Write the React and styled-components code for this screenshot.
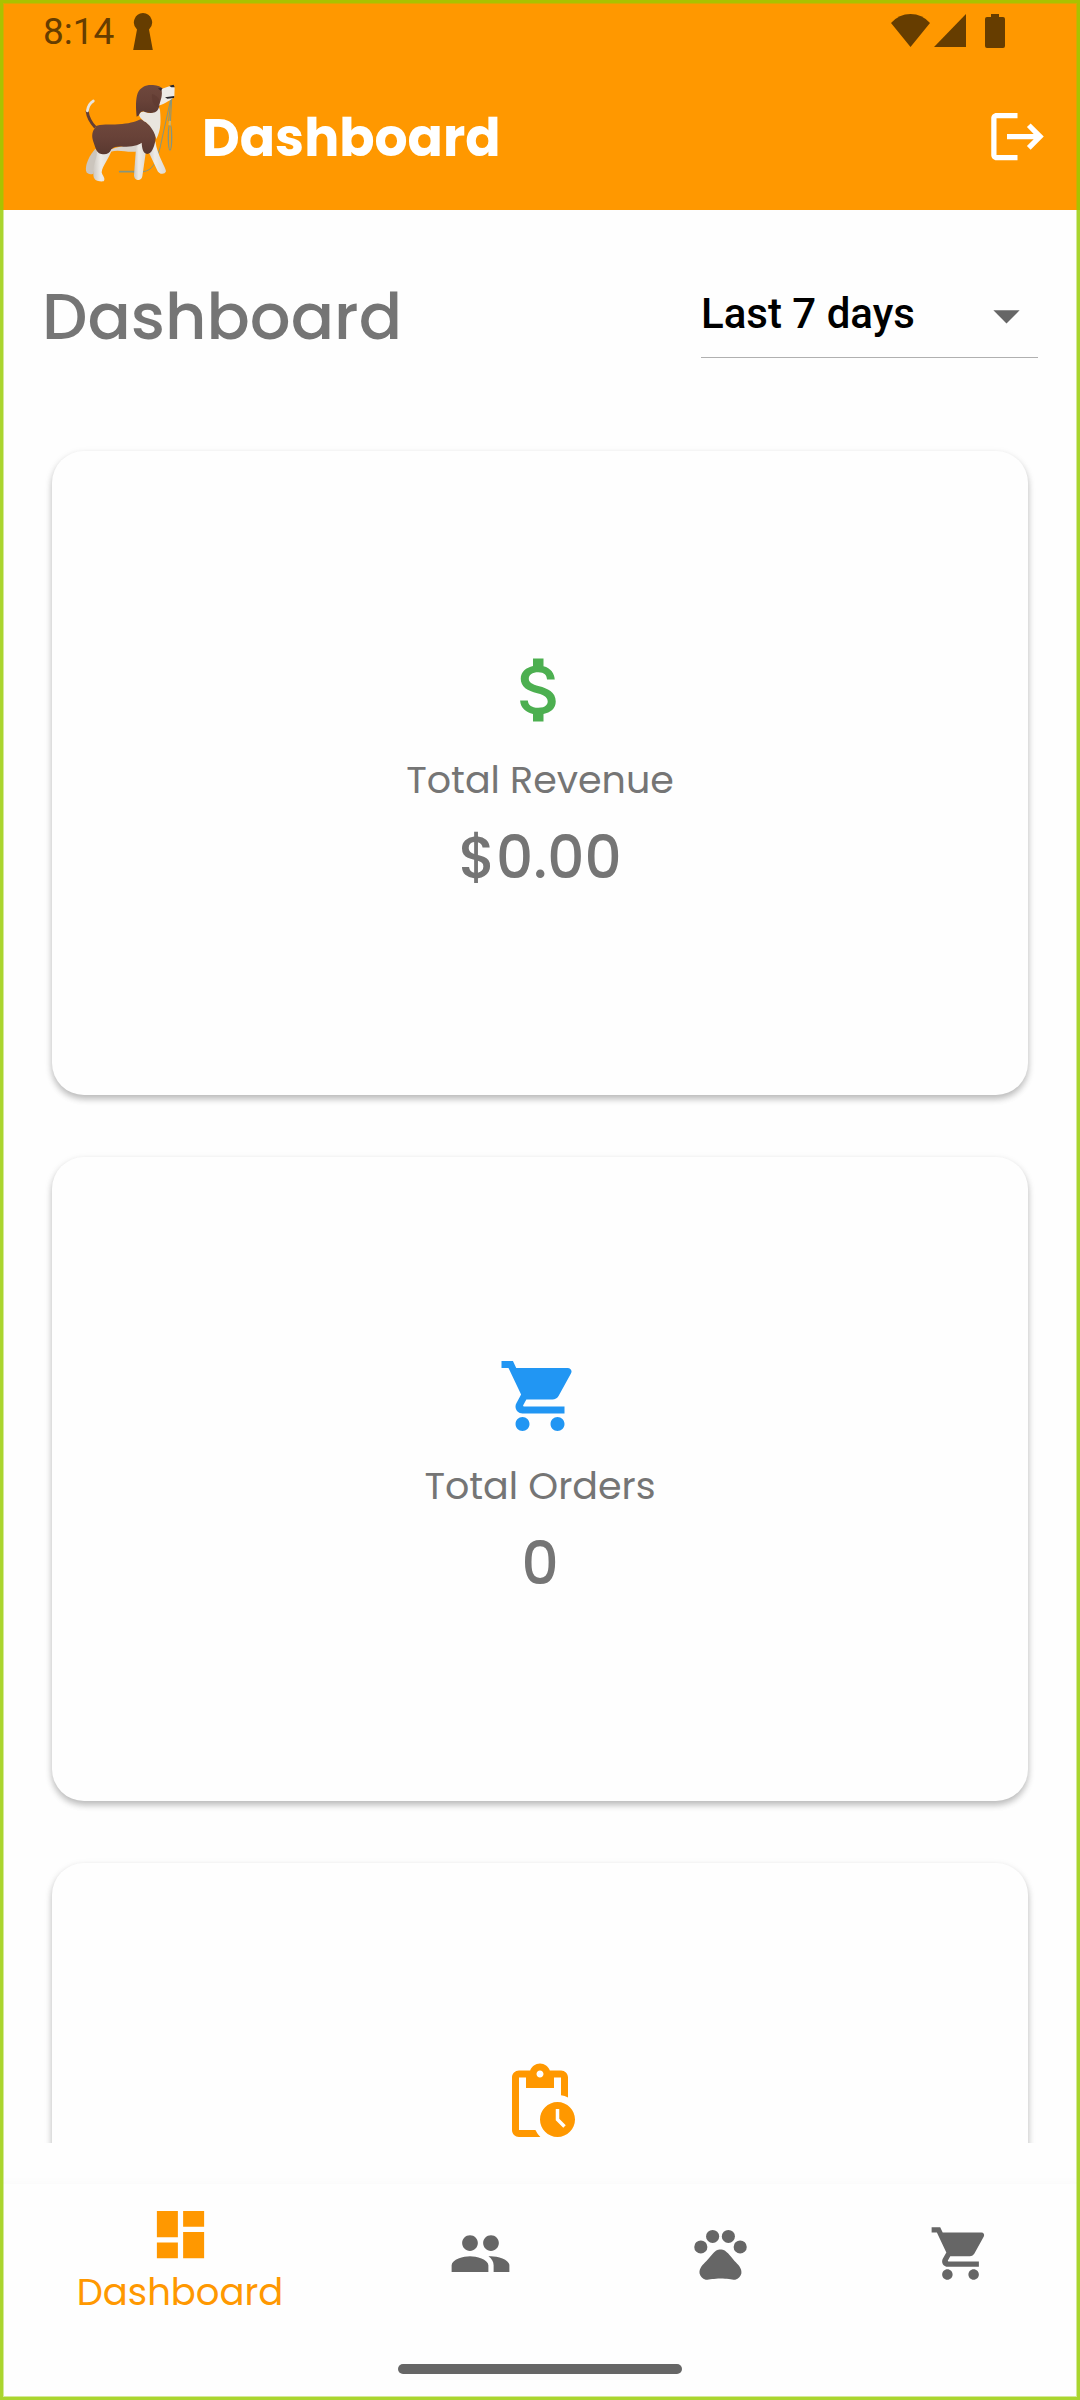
import React, { useState } from "react";
import styled, { createGlobalStyle } from "styled-components";
import {
  MdLogout,
  MdAttachMoney,
  MdShoppingCart,
  MdPendingActions,
  MdDashboard,
  MdPeople,
  MdPets,
  MdArrowDropDown,
} from "react-icons/md";

const GlobalStyle = createGlobalStyle`
  *, *::before, *::after { box-sizing: border-box; }
  body {
    margin: 0;
    background: #fefefe;
    color: #757575;
    font-family: Poppins, Inter, "Open Sans", sans-serif;
  }
  h1, h2, p, ul { margin: 0; padding: 0; }
`;

const Screen = styled.div`
  display: flex;
  flex-direction: column;
  height: 100vh;
`;

const FocusFrame = styled.div`
  position: fixed;
  inset: 0;
  z-index: 10;
  border: 3px solid rgba(151, 204, 0, 0.82);
  box-shadow: inset 0 0 0 1px rgba(151, 204, 0, 0.4);
  pointer-events: none;
`;

const Header = styled.header`
  flex: none;
  background: #ff9800;
`;

const StatusBar = styled.div`
  display: flex;
  align-items: center;
  justify-content: space-between;
  height: 63px;
  padding: 0 74px 0 43px;
  color: #663d00;
  font: 400 37px/62px Roboto, sans-serif;
`;

const StatusGroup = styled.div`
  display: flex;
  align-items: center;
  gap: ${(p) => p.$gap}px;
`;

const AppBar = styled.div`
  display: flex;
  align-items: center;
  gap: 22px;
  height: 147px;
  padding: 0 31px 0 84px;
  color: #fff;
`;

const AppTitle = styled.h1`
  flex: 1;
  padding-top: 2px;
  font-size: 52px;
  font-weight: 700;
  line-height: 80px;
`;

const IconButton = styled.button`
  display: flex;
  padding: 0;
  border: 0;
  background: none;
  color: inherit;
  font-size: 63px;
  cursor: pointer;
`;

const Content = styled.main`
  flex: 1;
  min-height: 0;
  margin-bottom: 41px;
  padding: 42px;
  overflow-y: auto;
  scrollbar-width: none;
`;

const Toolbar = styled.div`
  display: flex;
  align-items: center;
  justify-content: space-between;
  height: 128px;
  margin-bottom: 61px;
`;

const PageTitle = styled.h2`
  padding-top: 2px;
  font-size: 64px;
  font-weight: 500;
  line-height: 94px;
`;

const PeriodField = styled.label`
  position: relative;
  display: flex;
  align-items: flex-start;
  width: 337px;
  height: 84px;
  border-bottom: 1px solid #b0b0b0;
`;

const PeriodSelect = styled.select`
  width: 100%;
  height: 80px;
  padding: 0;
  border: 0;
  outline: 0;
  background: none;
  color: #000;
  appearance: none;
  font: 500 42px/80px Roboto, sans-serif;
`;

const SelectArrow = styled(MdArrowDropDown)`
  position: absolute;
  top: 10px;
  right: 0;
  color: #666;
  font-size: 63px;
  pointer-events: none;
`;

const CardGrid = styled.ul`
  display: grid;
  gap: 42px;
  list-style: none;
`;

const CardCell = styled.li`
  display: flex;
  aspect-ratio: 3 / 2;
  padding: 10px;
`;

const Card = styled.article`
  display: flex;
  flex: 1;
  align-items: center;
  justify-content: center;
  border-radius: 32px;
  background: #fefefe;
  box-shadow: 0 4px 6px rgba(0, 0, 0, 0.2), 0 3px 8px rgba(0, 0, 0, 0.1);
`;

const Stat = styled.div`
  display: flex;
  flex-direction: column;
  align-items: center;
  min-height: 250px;
`;

const StatIcon = styled.span`
  display: flex;
  margin-bottom: 21px;
  color: ${(p) => p.$color};
  font-size: 84px;
`;

const StatLabel = styled.p`
  margin-bottom: 12px;
  font-size: 38px;
  line-height: 53px;
`;

const StatValue = styled.p`
  font-size: 58px;
  font-weight: 500;
  line-height: 80px;
`;

const BottomNav = styled.nav`
  flex: none;
  background: #fefefe;
  box-shadow: 0 -2px 10px rgba(0, 0, 0, 0.02);
`;

const NavRow = styled.div`
  display: flex;
  height: 180px;
`;

const NavLink = styled.a`
  display: flex;
  flex: ${(p) => (p.$active ? 3 : 2)} 0 0;
  flex-direction: column;
  align-items: center;
  padding-top: ${(p) => (p.$active ? 19 : 38)}px;
  color: ${(p) => (p.$active ? "#ff9800" : "#666")};
  font-size: 37px;
  line-height: 53px;
  text-decoration: none;

  svg {
    font-size: 63px;
  }
`;

const HomeHandle = styled.div`
  width: 284px;
  height: 10px;
  margin: 0 auto 26px;
  border-radius: 5px;
  background: #666;
`;

function Keyhole() {
  return (
    <svg width="20" height="37" viewBox="0 0 20 37" fill="currentColor" aria-hidden="true">
      <path d="M10 0a9.500 9.500 0 0 1 6 16.500L19.800 37H.2L4 16.500A9.500 9.500 0 0 1 10 0z" />
    </svg>
  );
}

function SignalIcons() {
  return (
    <svg width="115" height="35" viewBox="0 0 115 35" fill="currentColor" aria-hidden="true">
      <path d="M0 9Q8 0 19.500 0T39 9L19.500 33z" />
      <path d="M75 0v33H43z" />
      <path d="M100 0h8v3h4q2 0 2 2v27q0 2-2 2H96q-2 0-2-2V5q0-2 2-2h4z" />
    </svg>
  );
}

function DogLogo() {
  return (
    <svg width="96" height="106" viewBox="42 40 288 318" fill="none" aria-hidden="true">
      <defs>
        <linearGradient id="coat" x1="0" y1="0" x2="0" y2="1">
          <stop offset="0" stopColor="#6f483d" />
          <stop offset="0.5" stopColor="#684238" />
          <stop offset="1" stopColor="#593830" />
        </linearGradient>
        <linearGradient id="fur" x1="0" y1="0" x2="1" y2="0">
          <stop offset="0" stopColor="#cdc8c1" />
          <stop offset="0.4" stopColor="#eeebe6" />
          <stop offset="1" stopColor="#dedad4" />
        </linearGradient>
      </defs>
      <g stroke="#85957f" strokeWidth="3" strokeLinecap="round">
        <path d="M303 84L296 150M305 84L301 160M302 86L270 232L256 275C240 303 225 305 190 304" />
        <path d="M149 303H196" strokeWidth="5" />
        <ellipse cx="300" cy="200" rx="5" ry="38" strokeWidth="4" />
      </g>
      <path d="M297 150l6 1-1 14-7-2z" fill="#d9b65d" />
      <path d="M51 120C54 142 62 156 76 170" stroke="#633d33" strokeWidth="9" />
      <path d="M52 121C54 107 60 97 70 91" stroke="#e8e4de" strokeWidth="8" strokeLinecap="round" />
      <path d="M76 234C60 252 45 280 48 300C50 309 60 313 70 309L84 246z" fill="#cbc5bd" />
      <path d="M116 240C145 222 190 226 212 213L206 240C180 250 150 234 122 243z" fill="#d8d3cc" />
      <path d="M80 238C84 260 68 280 70 307C69 329 80 333 101 332C108 324 97 315 95 305C97 286 117 264 126 236z" fill="url(#fur)" />
      <path d="M232 236L261 297C265 311 284 314 288 302C287 289 262 255 256 212z" fill="url(#fur)" />
      <path d="M198 232L192 312C191 331 214 334 217 317L228 240L212 210z" fill="url(#fur)" />
      <path d="M72 168C95 159 118 163 145 161C177 159 192 155 212 146C238 157 263 184 256 211C252 230 245 249 232 250C218 248 216 230 215 216C204 224 186 228 160 228C143 227 132 228 124 236C119 249 108 253 94 250C79 247 76 229 70 213C64 197 66 181 77 170z" fill="url(#coat)" />
      <path d="M207 132C211 123 222 119 234 127C247 128 262 121 265 105L270 118C273 151 273 179 259 205C254 187 246 170 228 155C221 151 209 142 207 132z" fill="#e9e5df" />
      <path d="M200 138C197 108 197 86 203 68C211 48 230 41 249 43C264 44 273 49 279 54C280 71 278 88 270 101C266 111 266 120 255 125C242 130 229 126 220 122C211 123 208 129 207 134z" fill="url(#coat)" />
      <path d="M274 55L298 47L314 50L313 79C304 86 288 98 266 105C272 91 279 72 274 55z" fill="#eeebe6" />
      <path d="M246 70C244 94 253 109 266 109C275 91 267 78 246 70z" fill="#5c392f" opacity="0.55" />
      <path d="M298 45L311 42L314 50L304 50zM285 80L313 76L312 82L292 84z" fill="#29262a" />
      <path d="M264 53L277 53L273 61z" fill="#33262a" />
    </svg>
  );
}

const stats = [
  { id: "revenue", icon: MdAttachMoney, color: "#4caf50", label: "Total Revenue", value: "$0.00" },
  { id: "orders", icon: MdShoppingCart, color: "#2196f3", label: "Total Orders", value: "0" },
  { id: "pending", icon: MdPendingActions, color: "#ff9800" },
];

const tabs = [
  { id: "dashboard", icon: MdDashboard, name: "Dashboard" },
  { id: "customers", icon: MdPeople, name: "Customers" },
  { id: "pets", icon: MdPets, name: "Pets" },
  { id: "cart", icon: MdShoppingCart, name: "Cart" },
];

export default function App() {
  const [period, setPeriod] = useState("7");
  const [tab, setTab] = useState("dashboard");

  return (
    <Screen>
      <GlobalStyle />
      <FocusFrame />
      <Header>
        <StatusBar>
          <StatusGroup $gap={19}>
            <span>8:14</span>
            <Keyhole />
          </StatusGroup>
          <SignalIcons />
        </StatusBar>
        <AppBar>
          <DogLogo />
          <AppTitle>Dashboard</AppTitle>
          <IconButton type="button" aria-label="Log out">
            <MdLogout />
          </IconButton>
        </AppBar>
      </Header>

      <Content>
        <Toolbar>
          <PageTitle>Dashboard</PageTitle>
          <PeriodField>
            <PeriodSelect
              aria-label="Period"
              value={period}
              onChange={(e) => setPeriod(e.target.value)}
            >
              <option value="7">Last 7 days</option>
            </PeriodSelect>
            <SelectArrow />
          </PeriodField>
        </Toolbar>

        <CardGrid>
          {stats.map(({ id, icon: Icon, color, label, value }) => (
            <CardCell key={id}>
              <Card>
                <Stat>
                  <StatIcon $color={color}>
                    <Icon />
                  </StatIcon>
                  {label && <StatLabel>{label}</StatLabel>}
                  {value && <StatValue>{value}</StatValue>}
                </Stat>
              </Card>
            </CardCell>
          ))}
        </CardGrid>
      </Content>

      <BottomNav>
        <NavRow>
          {tabs.map(({ id, icon: Icon, name }) => (
            <NavLink
              key={id}
              href={`#${id}`}
              aria-label={name}
              $active={tab === id}
              onClick={() => setTab(id)}
            >
              <Icon />
              {tab === id && <span>{name}</span>}
            </NavLink>
          ))}
        </NavRow>
        <HomeHandle />
      </BottomNav>
    </Screen>
  );
}
